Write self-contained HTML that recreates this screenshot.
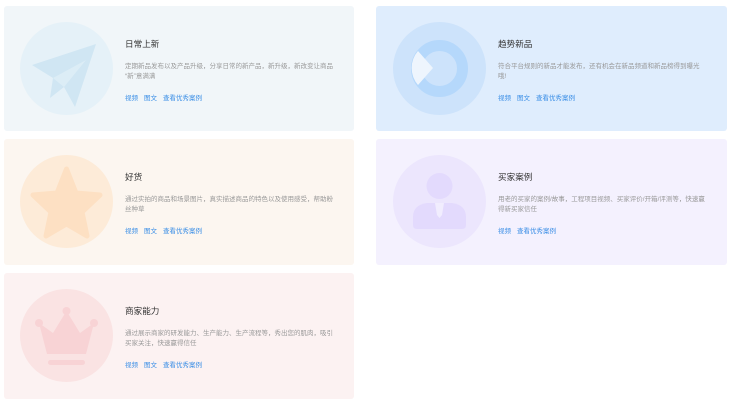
<!DOCTYPE html>
<html><head><meta charset="utf-8"><style>
*{margin:0;padding:0;box-sizing:border-box}
body{width:733px;height:400px;background:#fff;position:relative;overflow:hidden;font-family:"Liberation Sans","Noto Sans CJK SC",sans-serif}
.card{position:absolute;width:350px;height:125px;border-radius:3px}
.circ{position:absolute;left:16px;top:16px;width:93px;height:93px;border-radius:50%;overflow:hidden}
.circ svg{position:absolute;left:0;top:0}
.t{position:absolute;left:121px;top:32px;font-size:8.6px;color:#333}
.d{position:absolute;left:121px;top:56px;white-space:nowrap;font-size:6.5px;line-height:10px;color:#999}
.l{position:absolute;left:121px;top:86px;font-size:6.5px;color:#3a8ee6}
.l span{margin-right:6px}
</style></head><body>

<div class="card" style="left:4px;top:6px;background:#f1f6f9">
 <div class="circ" style="background:#e5f1f8">
  <svg width="93" height="93" viewBox="0 0 93 93"><path d="M12 43 L76 22 L55 85 L44 65 L30 76 L33 56 Z" fill="#d0e6f3"/><path d="M33 56 L66 38 L44 65" fill="#e5f1f8" opacity=".6"/></svg>
 </div>
 <div class="t">日常上新</div>
 <div class="d">定期新品发布以及产品升级，分享日常的新产品，新升级，新改变让商品<br>“新”意满满</div>
 <div class="l"><span>视频</span><span>图文</span><span>查看优秀案例</span></div>
</div>

<div class="card" style="left:376px;top:6px;width:351px;background:#dfedfd">
 <div class="circ" style="left:17px;background:#cde3fb">
  <svg width="93" height="93" viewBox="0 0 93 93"><circle cx="46.5" cy="46.5" r="23" fill="none" stroke="#b5d8fb" stroke-width="11"/><path d="M25 29 L40 46 L25 63 A26 26 0 0 1 25 29 Z" fill="#eef5fd"/></svg>
 </div>
 <div class="t" style="left:122px">趋势新品</div>
 <div class="d" style="left:122px">符合平台规则的新品才能发布，还有机会在新品频道和新品榜得到曝光<br>哦!</div>
 <div class="l" style="left:122px"><span>视频</span><span>图文</span><span>查看优秀案例</span></div>
</div>

<div class="card" style="left:4px;top:139px;height:126px;background:#fcf6f0">
 <div class="circ" style="background:#fdebd8">
  <svg width="93" height="93" viewBox="0 0 93 93"><path d="M46.5 14 L56 38 L80 40 L62 57 L67 81 L46.5 69 L26 81 L31 57 L13 40 L37 38 Z" fill="#fde0c3" stroke="#fde0c3" stroke-width="5" stroke-linejoin="round"/></svg>
 </div>
 <div class="t">好货</div>
 <div class="d">通过实拍的商品和场景图片，真实描述商品的特色以及使用感受，帮助粉<br>丝种草</div>
 <div class="l"><span>视频</span><span>图文</span><span>查看优秀案例</span></div>
</div>

<div class="card" style="left:376px;top:139px;width:351px;height:126px;background:#f4f1fe">
 <div class="circ" style="left:17px;background:#ece6fd">
  <svg width="93" height="93" viewBox="0 0 93 93"><circle cx="46.5" cy="31" r="13" fill="#e3dafd"/><path d="M20 62 Q20 50 34 48 L59 48 Q73 50 73 62 L73 70 Q73 74 69 74 L24 74 Q20 74 20 70 Z" fill="#e3dafd"/><path d="M42 48 L51 48 L49 60 L46.5 63 L44 60 Z" fill="#f1edfe"/></svg>
 </div>
 <div class="t" style="left:122px">买家案例</div>
 <div class="d" style="left:122px">用老的买家的案例/故事，工程项目视频、买家评价/开箱/评测等，快速赢<br>得新买家信任</div>
 <div class="l" style="left:122px"><span>视频</span><span>查看优秀案例</span></div>
</div>

<div class="card" style="left:4px;top:273px;height:126px;background:#fcf2f2">
 <div class="circ" style="background:#fae3e3">
  <svg width="93" height="93" viewBox="0 0 93 93"><circle cx="46.5" cy="22" r="4" fill="#f8d3d5"/><circle cx="19" cy="34" r="4" fill="#f8d3d5"/><circle cx="74" cy="34" r="4" fill="#f8d3d5"/><path d="M19 34 L33 44 L46.5 22 L60 44 L74 34 L66 65 L27 65 Z" fill="#f8d3d5"/><rect x="28" y="71" width="37" height="5" rx="2.5" fill="#f8d3d5"/></svg>
 </div>
 <div class="t">商家能力</div>
 <div class="d">通过展示商家的研发能力、生产能力、生产流程等，秀出您的肌肉，吸引<br>买家关注，快速赢得信任</div>
 <div class="l"><span>视频</span><span>图文</span><span>查看优秀案例</span></div>
</div>

</body></html>
